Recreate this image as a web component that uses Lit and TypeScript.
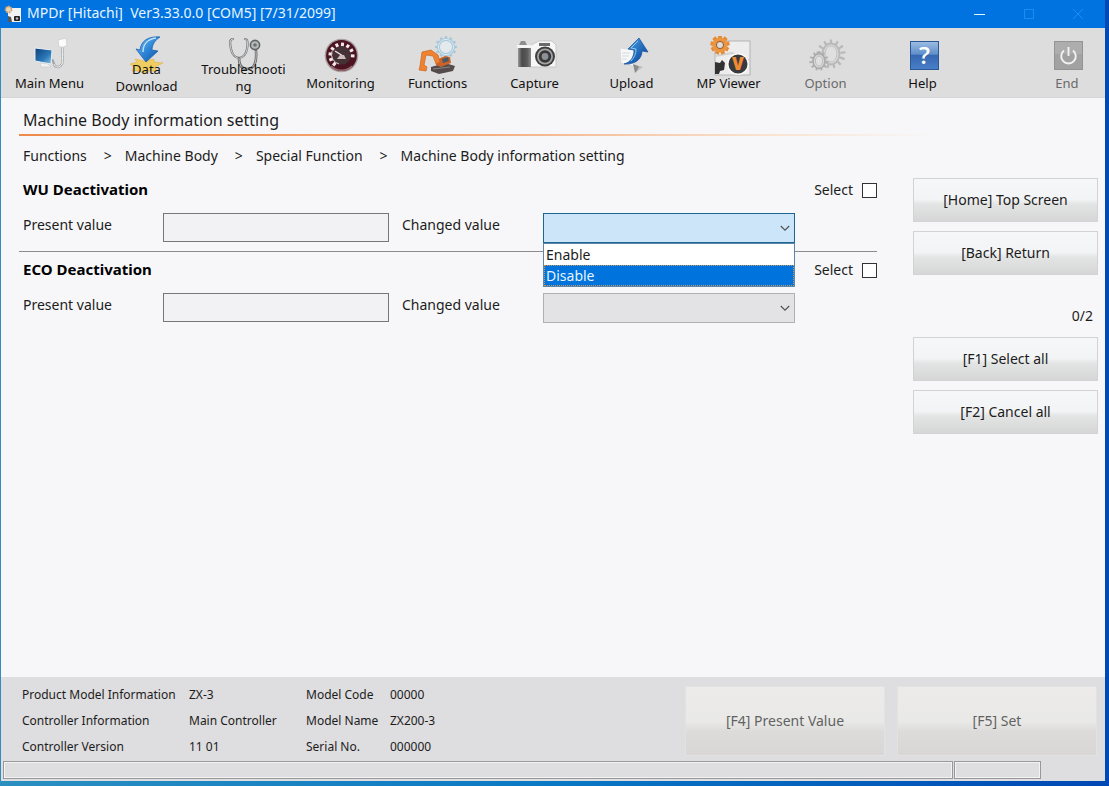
import { LitElement, html, css, svg, nothing, TemplateResult } from "lit";
import { customElement, state } from "lit/decorators.js";
import { classMap } from "lit/directives/class-map.js";

const gearTeeth = (cx: number, cy: number, r: number, n: number, w: number, len: number, color: string) =>
  Array.from({ length: n }, (_, i) => svg`<rect x=${cx - w / 2} y=${cy - r - len} width=${w} height=${len + 1} fill=${color}
    transform=${`rotate(${(360 / n) * i} ${cx} ${cy})`} />`);

const dialTicks = Array.from({ length: 9 }, (_, i) => svg`<rect x="22" y="6.500" width="3" height="3.600" fill="#f3e9ea"
    transform=${`rotate(${-140 + i * 29} 23.5 19.5)`} />`);

const icons: Record<string, TemplateResult> = {
  menu: svg`
    <defs><linearGradient id="scr" x1="0" y1="0" x2="1" y2="1"><stop offset="0" stop-color="#0d3f7d"/><stop offset=".6" stop-color="#2b78b8"/><stop offset="1" stop-color="#8cc4e6"/></linearGradient></defs>
    <path d="M13 27l8 1 3 3-10 0z" fill="#f2f3f4" stroke="#c2c6ca" stroke-width=".6"/>
    <path d="M8 12l17 2-1 14-16-3z" fill="url(#scr)" stroke="#e8edf2" stroke-width="1"/>
    <path d="M36 11c-2 6 1 13-1 17-2 4-7 4-8 0-1-3-1-4-2-4" fill="none" stroke="#a4a7aa" stroke-width="2.4"/>
    <path d="M36 11c-2 6 1 13-1 17-2 4-7 4-8 0" fill="none" stroke="#f4f4f4" stroke-width="1"/>
    <path d="M31 4l8-2 1 7-3 2h-5z" fill="#fbfbfb" stroke="#c9cacc" stroke-width=".7"/>`,
  download: svg`
    <defs><linearGradient id="dn" x1="0" y1="0" x2="1" y2="1"><stop offset="0" stop-color="#7fc4f4"/><stop offset=".5" stop-color="#2e86d6"/><stop offset="1" stop-color="#0d4fa3"/></linearGradient></defs>
    <path d="M6 28l7-2-2-3 9 2 10-2 0 3 9 1-8 4 2 4-9 0-4 3-4-3-8 0 2-4z" fill="#f0cd61" stroke="#dcb54b" stroke-width=".6"/>
    <path d="M36 1C24 0 17 5 16 14l-4-1 10 13 12-11-6-1c0-5 3-10 8-13z" fill="url(#dn)" stroke="#1c63b2" stroke-width=".8"/>
    <path d="M32 2c-8 1-13 6-13 14" fill="none" stroke="#bfe3fb" stroke-width="1.4"/>`,
  stethoscope: svg`
    <g fill="none" stroke-linecap="round">
    <path d="M12 3c-4 0-3 5-2 10 1 5 4 9 8 9s7-4 8-9c1-5 1-10-2-10" stroke="#6f7375" stroke-width="2.2"/>
    <path d="M12 3c-4 0-3 5-2 10 1 5 4 9 8 9s7-4 8-9c1-5 1-10-2-10" stroke="#eceeee" stroke-width=".8"/>
    <path d="M18 22c0 8 3 11 8 11 7 0 10-6 9-18" stroke="#66696b" stroke-width="2.6"/>
    <path d="M18 22c0 8 3 11 8 11 7 0 10-6 9-18" stroke="#d4d6d6" stroke-width=".8"/></g>
    <circle cx="34" cy="9" r="4.6" fill="#b6bab9" stroke="#5f6466" stroke-width="1.6"/><circle cx="34" cy="9" r="1.8" fill="#6a6f70"/>`,
  dial: svg`
    <circle cx="23.5" cy="19.5" r="16.8" fill="#a89fa1"/><circle cx="23.5" cy="19.5" r="15.4" fill="#4b1420"/>
    <circle cx="23.5" cy="19.5" r="9.2" fill="#453236"/>${dialTicks}
    <path d="M14 15a10 10 0 0 0 7 13" fill="none" stroke="#d9c8ca" stroke-width="1"/>
    <path d="M17 15l8 5" stroke="#f0e4e4" stroke-width="1.4"/><path d="M19 23h9l-2-4h-4z" fill="#c8bcbd"/>
    <path d="M13 30a15 15 0 0 0 21 0" fill="none" stroke="#96696f" stroke-width="1.6"/>`,
  excavator: svg`
    ${gearTeeth(31, 11, 8.5, 12, 2.4, 2.4, "#a9c7d8")}
    <circle cx="31" cy="11" r="7.6" fill="#e3e9ec" stroke="#a9c9dc" stroke-width="3"/><circle cx="31" cy="11" r="7.6" fill="none" stroke="#dceaf2" stroke-width="1"/>
    <path d="M16 31l14-4 10 3-2 5-14 3-8-3z" fill="#544c4c"/><path d="M18 33l17-2" stroke="#8b8280" stroke-width="1"/>
    <path d="M21 24l9-4 5 1 1 6-10 4-5-2z" fill="#c9632a"/><path d="M27 23l6-2 1 4-6 2z" fill="#4c5962"/>
    <path d="M7 16l9-2 7 5 2 7-4 2-3-8-7-1-2 10 3 2-1 4-7-1 1-4z" fill="#ef8230" stroke="#c8651f" stroke-width=".7"/>`,
  camera: svg`
    <defs><linearGradient id="grip"><stop offset="0" stop-color="#9a9a9a"/><stop offset=".3" stop-color="#4a4a4a"/><stop offset=".7" stop-color="#5a5a5a"/><stop offset="1" stop-color="#8a8a8a"/></linearGradient></defs>
    <path d="M7 9l2-4h4l2 4z" fill="#8e8e8e"/><path d="M17 10l6-3 4-2h13l4 4v22H17z" fill="#f7f7f7" stroke="#b9b9b9" stroke-width=".7"/>
    <path d="M6 11h13v20H6z" fill="url(#grip)"/><path d="M5 9h14v3H5z" fill="#f4f4f4"/>
    <path d="M27 7h11v3H27z" fill="#6b6b6b"/>
    <circle cx="33" cy="20.500" r="10" fill="#3e3e3e"/><circle cx="33" cy="20.500" r="8" fill="#a5a5a5"/><circle cx="33" cy="20.500" r="6.200" fill="#373737"/><circle cx="33" cy="20.500" r="3.400" fill="#8b9196"/>`,
  upload: svg`
    <defs><linearGradient id="up" x1="0" y1="0" x2="1" y2="1"><stop offset="0" stop-color="#57aee9"/><stop offset=".6" stop-color="#1f66b8"/><stop offset="1" stop-color="#0b3f8d"/></linearGradient></defs>
    <path d="M11 12l15 2-1 16-13-3z" fill="#f6f7f8" stroke="#d2d5d8" stroke-width=".7"/><path d="M13 17h8m-8 3h7m-7 3h5" stroke="#cfd3d6" stroke-width=".8"/>
    <path d="M24 28l8 3-6 6z" fill="#8b8b8b"/><path d="M30 30l4 1-6 4z" fill="#bdbdbd"/>
    <path d="M30 2l9 14-6-1c0 8-7 14-18 13 7-2 10-7 10-14l-6-1z" fill="url(#up)" stroke="#174f96" stroke-width=".7"/>
    <path d="M29 5l-7 7 5 1c0 5-2 9-5 12" fill="none" stroke="#8dcbf3" stroke-width="1"/>`,
  viewer: svg`
    <rect x="9" y="5" width="35" height="34" fill="#ededed" stroke="#a9a9a9" stroke-width=".8"/><path d="M9 20l17-3 17 7" stroke="#d2d2d2" stroke-width="2" fill="none"/>
    <path d="M9 26l5 1 2-3 3 3-1 7-4 1-1 3H9z" fill="#333"/><circle cx="32" cy="28" r="11" fill="#fafafa"/><circle cx="32" cy="28" r="9.500" fill="#3a3a3c"/>
    <text x="32" y="34" text-anchor="middle" font-family="Open Sans, sans-serif" font-size="17" font-weight="800" fill="#ef8a35">V</text>
    ${gearTeeth(14, 9, 7, 9, 4, 2.6, "#e58a35")}<circle cx="14" cy="9" r="7.6" fill="#ec9440"/><circle cx="14" cy="9" r="3.600" fill="#dedbd8" stroke="#8f5a2c" stroke-width="1"/>`,
  gears: svg`
    ${gearTeeth(28, 18, 10.5, 13, 2.2, 4, "#b9b7b7")}<ellipse cx="28" cy="18" rx="8.5" ry="10.5" fill="#dad9d9" stroke="#bab9b9" stroke-width="1.800"/><ellipse cx="28" cy="18" rx="6" ry="8" fill="#e0dfdf" stroke="#c2c0c0" stroke-width="1"/>
    ${gearTeeth(16, 25, 7.5, 11, 1.8, 2.2, "#aeacac")}<ellipse cx="16" cy="25" rx="6" ry="7.500" fill="#dad9d9" stroke="#adabab" stroke-width="1.800"/><ellipse cx="16" cy="25" rx="3.600" ry="5" fill="#e0dfdf" stroke="#bbb" stroke-width="1"/>`,
  help: svg`
    <defs><linearGradient id="hp" x1="0" y1="0" x2="0" y2="1"><stop offset="0" stop-color="#9dbde4"/><stop offset=".45" stop-color="#5f8fcb"/><stop offset=".5" stop-color="#3568b0"/><stop offset="1" stop-color="#4a80c8"/></linearGradient></defs>
    <rect x="10.500" y="5.500" width="28" height="28" fill="url(#hp)" stroke="#2c5795"/>
    <text x="24.500" y="28" text-anchor="middle" font-family="Open Sans, sans-serif" font-size="24" font-weight="600" fill="#fff">?</text>`,
  power: svg`
    <rect x="10.500" y="5.500" width="28" height="28" fill="#a2a2a2" stroke="#949494"/><path d="M11 6h27v12H11z" fill="#adadad"/>
    <path d="M20 14.500a7.300 7.300 0 1 0 9 0M24.500 11v9" fill="none" stroke="#f2f2f2" stroke-width="1.900"/>`,
};

interface Tool { icon: string; label: string; disabled?: boolean; wrap?: boolean; last?: boolean }

const tools: Tool[] = [
  { icon: "menu", label: "Main Menu" },
  { icon: "download", label: "Data Download", wrap: true },
  { icon: "stethoscope", label: "Troubleshooting", wrap: true },
  { icon: "dial", label: "Monitoring" },
  { icon: "excavator", label: "Functions" },
  { icon: "camera", label: "Capture" },
  { icon: "upload", label: "Upload" },
  { icon: "viewer", label: "MP Viewer" },
  { icon: "gears", label: "Option", disabled: true },
  { icon: "help", label: "Help" },
  { icon: "power", label: "End", disabled: true, last: true },
];

const settings = [
  { id: "wu", name: "WU Deactivation" },
  { id: "eco", name: "ECO Deactivation" },
];

const machine = [
  ["Product Model Information", "ZX-3", "Model Code", "00000"],
  ["Controller Information", "Main Controller", "Model Name", "ZX200-3"],
  ["Controller Version", "11 01", "Serial No.", "000000"],
];

@customElement("app-root")
export class AppRoot extends LitElement {
  @state() private openList: string | null = "wu";
  @state() private checked: string[] = [];
  @state() private values: Record<string, string> = {};

  static styles = css`
    :host {
      display: flex; flex-direction: column; box-sizing: border-box; min-height: 100vh;
      padding: 0 4px 5px 1px; color: #1c1c1c;
      background: linear-gradient(90deg, #2b8fc0, #0a78c4 50%, #0048b4);
      font-family: "Noto Sans", "Open Sans", sans-serif; font-size: 14px; line-height: 20px;
    }
    * { box-sizing: border-box; }
    button, input, select { font: inherit; color: inherit; margin: 0; }
    h1, h2, ul, dl, dd, ol { margin: 0; padding: 0; font-weight: normal; list-style: none; }
    .titlebar { display: flex; align-items: center; height: 28px; margin-left: -1px; background: #0073e0; color: #e8f5ff; padding-left: 4px; }
    .titlebar svg { width: 18px; height: 18px; margin-right: 5px; }
    .titlebar h1 { font-size: 14px; line-height: 24px; padding-bottom: 2px; flex: 1; white-space: pre; }
    .win { width: 49px; height: 28px; padding: 0; border: 0; background: none; color: #1d8bf0; display: grid; place-items: center; }
    .win.on { color: #e3f6ff; }
    .titlebar .win svg { width: 12px; height: 12px; margin: 0 6px 0 0; }
    .toolbar { display: flex; height: 70px; background: #dedddd; border-bottom: 1px solid #d6d5d6; }
    .tool { display: grid; width: 97px; padding: 8px 6px 0 6px; border: 0; background: none; font-size: 13px; line-height: 17px; justify-items: center; color: #111; }
    .tool svg, .tool span { grid-area: 1 / 1; }
    .tool svg { width: 46px; height: 40px; align-self: start; }
    .tool span { align-self: end; padding-bottom: 5px; }
    .tool.wrap span { padding-bottom: 2px; overflow-wrap: anywhere; }
    .tool:disabled { color: #6a6a6a; }
    .tool.last { width: 76px; margin-left: auto; }
    .main { flex: 1; background: #f7f7f9; padding: 10px 7px 16px 18px; }
    .main h2.page { font-size: 16px; line-height: 24px; padding-left: 4px; }
    .rule { height: 2px; margin-top: 2px; background: linear-gradient(90deg, #ee8a4a, #f3a878 40%, #f9e4d2 70%, #f7f7f9 85%); }
    .crumbs { display: flex; gap: 13px; padding-left: 4px; margin-top: 10px; }
    .crumbs a { color: inherit; text-decoration: none; }
    .crumbs li { display: flex; gap: 17px; }
    .cols { display: grid; grid-template-columns: minmax(0, 1fr) 185px; gap: 36px; margin-top: 12px; }
    .setting { padding: 0 0 8px 4px; border-bottom: 1px solid #8d8d8f; }
    .setting + .setting { padding-top: 6px; border-bottom: 0; }
    .head { display: flex; justify-content: space-between; align-items: center; height: 24px; }
    .head h2 { font-size: 15px; padding-bottom: 3px; font-weight: bold; color: #000; }
    .head label { display: flex; align-items: center; gap: 9px; }
    .head input { appearance: none; width: 15px; height: 15px; border: 1px solid #333; background: #fff; }
    .head input:checked { background: #333; }
    .fields { display: grid; grid-template-columns: 140px minmax(0, 226fr) 154px minmax(0, 252fr) 82px; margin-top: 11px; }
    .fields label { line-height: 24px; }
    .fields label.second { padding-left: 13px; }
    .fields input { height: 29px; width: 100%; border: 1px solid #77777a; background: #f2f2f4; padding: 0 4px; }
    .combo { position: relative; height: 30px; }
    .combo select { appearance: none; width: 100%; height: 30px; border: 1px solid #b0b0b2; border-radius: 0; background: #e3e2e4; padding: 0 4px; outline: 0; }
    .combo.open select { background: #cde5f8; border-color: #1c6694; }
    .combo > svg { position: absolute; right: 5px; top: 11px; width: 10px; height: 8px; pointer-events: none; }
    .list { position: absolute; top: 30px; left: 0; right: 0; z-index: 2; background: #fff; border: 1px solid #5c87a8; }
    .list li { padding: 0 2px; line-height: 21px; }
    .list li + li { background: #0073dc; color: #e6f4ff; outline: 1px dotted #c99a5a; outline-offset: -1px; }
    .side { display: flex; flex-direction: column; gap: 9px; }
    .side button { height: 44px; border: 1px solid #d2d3d5; background: linear-gradient(#f5f7f8, #f3f4f5 48%, #e3e4e4 60%, #d5d6d5); }
    .count { height: 44px; display: flex; align-items: flex-end; justify-content: flex-end; padding-right: 5px; line-height: 24px; }
    .footer { background: #dedddf; padding: 4px 8px 2px 2px; }
    .info { display: flex; justify-content: space-between; padding-left: 19px; gap: 20px; }
    .info dl { display: grid; grid-template-columns: 167px 117px 84px auto; font-size: 12px; line-height: 26px; padding-top: 1px; white-space: nowrap; }
    .acts { display: flex; gap: 12px; padding-top: 5px; }
    .acts button { width: 200px; height: 70px; border: 1px solid #e3e2e2; background: linear-gradient(#ecebea, #e9e9e7 50%, #dcdbda 66%, #d8d7d6); color: #626262; }
    .status { display: flex; gap: 1px; margin-top: 1px; padding-right: 56px; }
    .status div { height: 18px; border: 1px solid #98979a; box-shadow: inset 0 0 0 1px #f3f3f3; width: 87px; }
    .status div:first-child { flex: 1; }
  `;

  private toggle(id: string, on: boolean) {
    this.checked = on ? [...this.checked, id] : this.checked.filter((c) => c !== id);
  }

  private pick(id: string, value: string) {
    this.values = { ...this.values, [id]: value };
    this.openList = null;
  }

  private renderSetting(s: { id: string; name: string }) {
    const open = this.openList === s.id;
    return html`<section class="setting">
      <div class="head">
        <h2>${s.name}</h2>
        <label>Select <input type="checkbox" .checked=${this.checked.includes(s.id)}
          @change=${(e: Event) => this.toggle(s.id, (e.target as HTMLInputElement).checked)} /></label>
      </div>
      <div class="fields">
        <label for=${s.id + "-now"}>Present value</label>
        <input id=${s.id + "-now"} type="text" readonly />
        <label class="second" for=${s.id + "-new"}>Changed value</label>
        <div class=${classMap({ combo: true, open })}>
          <select id=${s.id + "-new"} .value=${this.values[s.id] ?? ""}
            @mousedown=${(e: Event) => { e.preventDefault(); this.openList = open ? null : s.id; }}>
            <option value=""></option><option>Enable</option><option>Disable</option>
          </select>
          <svg viewBox="0 0 10 8"><path d="M.8 2L5 6.200 9.200 2" fill="none" stroke="#505458" stroke-width="1.200" /></svg>
          ${open ? html`<ul class="list" role="listbox" aria-label="Changed value">
            ${["Enable", "Disable"].map((v) => html`<li role="option" @click=${() => this.pick(s.id, v)}>${v}</li>`)}
          </ul>` : nothing}
        </div>
      </div>
    </section>`;
  }

  render() {
    return html`
      <header class="titlebar">
        <svg viewBox="0 0 18 18"><rect x="4" y="3" width="13" height="14" fill="#f2f2f2"/><path d="M4 11l3 1 1 5H4z" fill="#555"/><rect x="10" y="11" width="6" height="5" rx="1" fill="#222"/><circle cx="13" cy="13.500" r="1.300" fill="#bbb"/><circle cx="4.500" cy="4.500" r="3" fill="#f0d5b5" stroke="#c9a274" stroke-width="1.800" stroke-dasharray="1.700 1"/></svg>
        <h1>MPDr [Hitachi]  Ver3.33.0.0 [COM5] [7/31/2099]</h1>
        <button class="win on" aria-label="Minimize"><svg viewBox="0 0 12 12"><path d="M0 6.500h11" stroke="currentColor"/></svg></button>
        <button class="win" aria-label="Maximize"><svg viewBox="0 0 12 12"><rect x="1.500" y="1.500" width="9" height="9" fill="none" stroke="currentColor"/></svg></button>
        <button class="win" aria-label="Close"><svg viewBox="0 0 12 12"><path d="M1 1l10 10M11 1L1 11" stroke="currentColor"/></svg></button>
      </header>
      <nav class="toolbar">
        ${tools.map((t) => html`<button class=${classMap({ tool: true, wrap: !!t.wrap, last: !!t.last })} ?disabled=${t.disabled}>
          <svg viewBox="0 0 46 40" aria-hidden="true">${icons[t.icon]}</svg><span>${t.label}</span></button>`)}
      </nav>
      <main class="main">
        <h2 class="page">Machine Body information setting</h2>
        <div class="rule"></div>
        <ol class="crumbs">
          ${["Functions", "Machine Body", "Special Function"].map((c) => html`<li><a href="#">${c}</a><span>&gt;</span></li>`)}
          <li>Machine Body information setting</li>
        </ol>
        <div class="cols">
          <div>${settings.map((s) => this.renderSetting(s))}</div>
          <aside class="side">
            <button>[Home] Top Screen</button>
            <button>[Back] Return</button>
            <div class="count">${this.checked.length}/${settings.length}</div>
            <button @click=${() => (this.checked = settings.map((s) => s.id))}>[F1] Select all</button>
            <button @click=${() => (this.checked = [])}>[F2] Cancel all</button>
          </aside>
        </div>
      </main>
      <footer class="footer">
        <div class="info">
          <dl>${machine.map((r) => html`<dt>${r[0]}</dt><dd>${r[1]}</dd><dt>${r[2]}</dt><dd>${r[3]}</dd>`)}</dl>
          <div class="acts"><button disabled>[F4] Present Value</button><button disabled>[F5] Set</button></div>
        </div>
        <div class="status"><div></div><div></div></div>
      </footer>`;
  }
}
